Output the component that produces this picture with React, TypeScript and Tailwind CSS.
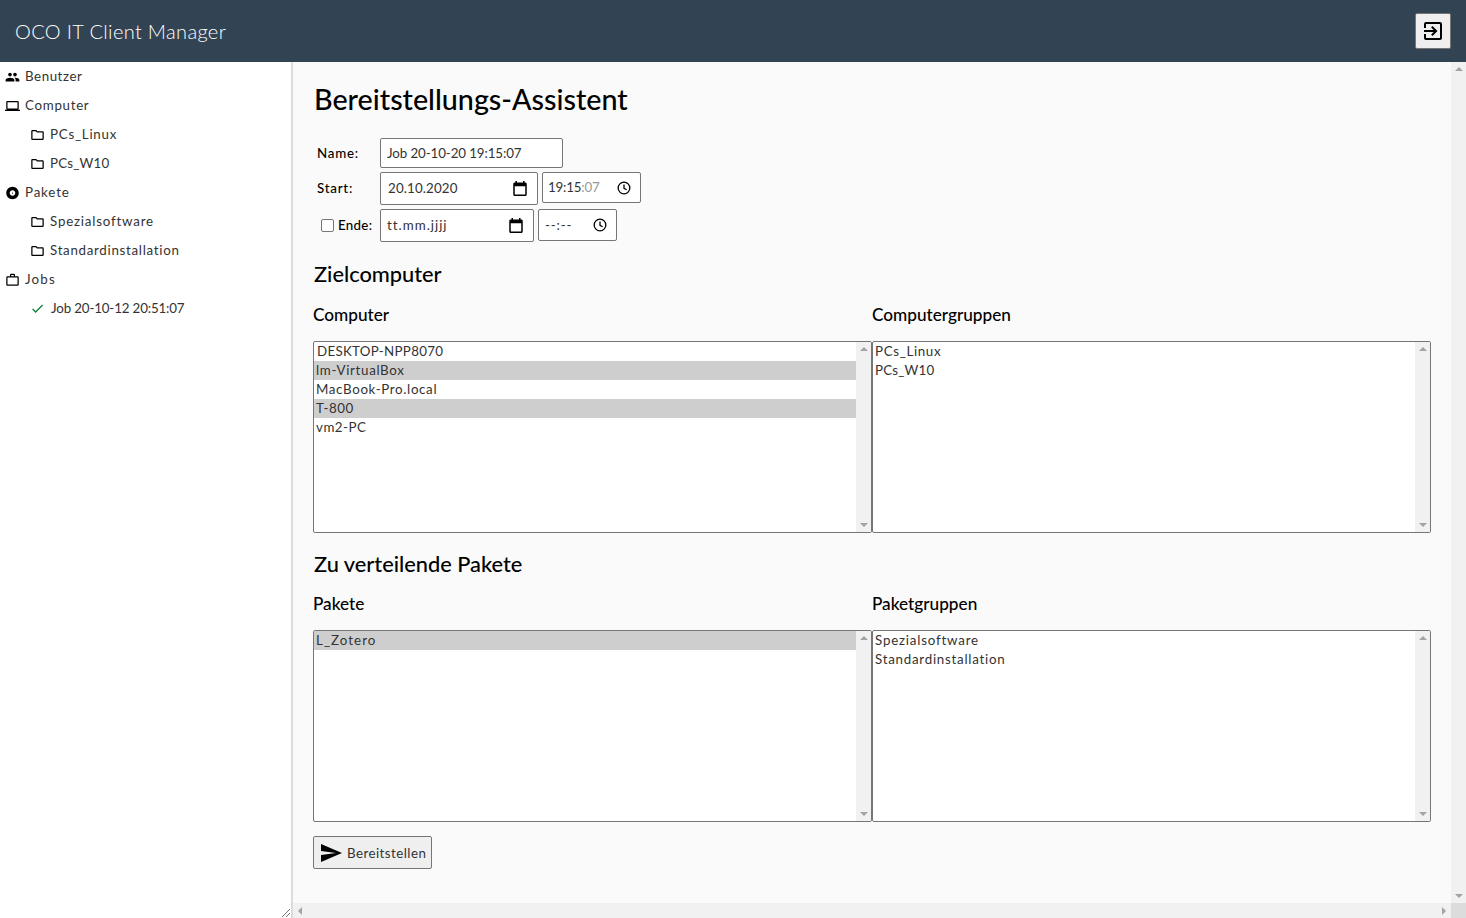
import { MdPeople, MdOutlineLaptop, MdOutlineFolder, MdAlbum, MdOutlineWorkOutline, MdCheck, MdExitToApp, MdSend } from 'react-icons/md';
import type { ReactNode } from 'react';

const CalendarIcon = () => (
  <svg width="14" height="15" viewBox="3 1 18 20" fill="#000">
    <path d="M19 3h-1V1h-2v2H8V1H6v2H5c-1.11 0-1.99.9-1.99 2L3 19c0 1.1.89 2 2 2h14c1.1 0 2-.9 2-2V5c0-1.1-.9-2-2-2zm0 16H5V8h14v11z" />
  </svg>
);

const ClockIcon = () => (
  <svg width="14" height="14" viewBox="0 0 24 24" fill="none" stroke="#000" strokeWidth="2.2">
    <circle cx="12" cy="12" r="10" />
    <path d="M12 6v6.5l4.5 2.5" />
  </svg>
);

const ArrowUp = () => <div className="w-0 h-0 border-x-[4px] border-x-transparent border-b-[4px] border-b-[#a3a3a3]" />;
const ArrowDown = () => <div className="w-0 h-0 border-x-[4px] border-x-transparent border-t-[4px] border-t-[#a3a3a3]" />;

function SideItem({ icon, label, sub, tracking = 'tracking-[0.65px]' }: { icon: ReactNode; label: string; sub?: boolean; tracking?: string }) {
  return (
    <div className={`flex items-center h-[29px] text-[13.33px] text-[#333] ${sub ? 'pl-[30px]' : 'pl-[5px]'}`}>
      <span className="w-[15px] h-[15px] flex items-center justify-center mr-[5px] text-black">{icon}</span>
      <span className={tracking}>{label}</span>
    </div>
  );
}

type Item = { label: string; selected?: boolean; tracking?: string };

function ListBox({ items }: { items: Item[] }) {
  return (
    <div className="flex-1 h-[192px] border border-[#767676] rounded-[2px] bg-white flex overflow-hidden">
      <div className="flex-1">
        {items.map(item => (
          <div
            key={item.label}
            className={`h-[19px] pl-[2px] text-[13.33px] leading-[19px] text-[#333] ${item.tracking ?? 'tracking-[0.65px]'} ${item.selected ? 'bg-[#cecece]' : ''}`}
          >
            {item.label}
          </div>
        ))}
      </div>
      <div className="w-[15px] bg-[#f1f1f1] flex flex-col items-center justify-between py-[5px]">
        <ArrowUp />
        <ArrowDown />
      </div>
    </div>
  );
}

function Field({ width, height, children }: { width: string; height: string; children: ReactNode }) {
  return (
    <div className={`${width} ${height} border border-[#767676] rounded-[2px] bg-white flex items-center justify-between text-[13.33px] text-[#333]`}>
      {children}
    </div>
  );
}

export default function App() {
  return (
    <div className="h-[918px] w-[1466px] flex flex-col overflow-hidden font-['Lato',sans-serif]">
      {/* Header */}
      <div className="h-[62px] bg-[#324454] flex items-center justify-between pl-[15px] pr-[15px]">
        <span className="text-[20px] font-light text-white tracking-[0.35px]">OCO IT Client Manager</span>
        <button className="w-[36px] h-[36px] bg-[#efefef] border border-[#767676] rounded-[2px] flex items-center justify-center">
          <MdExitToApp size={24} color="#000" />
        </button>
      </div>

      <div className="flex-1 flex min-h-0">
        {/* Sidebar */}
        <div className="relative w-[293px] bg-white border-r-2 border-[#dcdcdc]">
          <SideItem icon={<MdPeople size={16} />} label="Benutzer" tracking="tracking-[0.55px]" />
          <SideItem icon={<MdOutlineLaptop size={16} />} label="Computer" tracking="tracking-[0.7px]" />
          <SideItem sub icon={<MdOutlineFolder size={16} />} label="PCs_Linux" tracking="tracking-[0.75px]" />
          <SideItem sub icon={<MdOutlineFolder size={16} />} label="PCs_W10" tracking="tracking-[0.2px]" />
          <SideItem icon={<MdAlbum size={16} />} label="Pakete" tracking="tracking-[0.85px]" />
          <SideItem sub icon={<MdOutlineFolder size={16} />} label="Spezialsoftware" tracking="tracking-[0.8px]" />
          <SideItem sub icon={<MdOutlineFolder size={16} />} label="Standardinstallation" tracking="tracking-[0.7px]" />
          <SideItem icon={<MdOutlineWorkOutline size={16} />} label="Jobs" tracking="tracking-[1.2px]" />
          <SideItem sub icon={<MdCheck size={15} color="#15803d" />} label="Job 20-10-12 20:51:07" tracking="tracking-[-0.15px] ml-px" />
          <svg className="absolute right-0 bottom-0" width="10" height="10" viewBox="0 0 10 10" stroke="#777" strokeWidth="1">
            <path d="M1 9 9 1M5 9l4-4" />
          </svg>
        </div>

        {/* Main */}
        <div className="flex-1 flex flex-col min-w-0 bg-[#fafafa]">
          <div className="flex-1 flex min-h-0">
            <div className="flex-1 pl-[20px] pr-[20px] pt-[17px] text-black">
              <h1 className="h-[40px] leading-[40px] text-[28.7px] font-medium ml-px">Bereitstellungs-Assistent</h1>

              <div className="mt-[19px] flex flex-col gap-[4px]">
                <div className="flex items-center">
                  <label className="w-[67px] pl-[4px] pt-px text-[13.33px] font-medium tracking-[0.75px]">Name:</label>
                  <Field width="w-[183px]" height="h-[30px]">
                    <span className="pl-[6px] pt-px tracking-[-0.1px]">Job 20-10-20 19:15:07</span>
                  </Field>
                </div>
                <div className="flex items-start gap-[4px]">
                  <label className="w-[63px] h-[32px] flex items-center pl-[4px] pt-px text-[13.33px] font-medium tracking-[0.75px]">Start:</label>
                  <Field width="w-[158px]" height="h-[33px]">
                    <span className="pl-[7px] pt-px tracking-[0.15px]">20.10.2020</span>
                    <span className="mr-[10px] flex"><CalendarIcon /></span>
                  </Field>
                  <Field width="w-[99px]" height="h-[31px]">
                    <span className="pl-[5px] pt-px tracking-[-0.2px]">19:15<span className="text-[#999]">:07</span></span>
                    <span className="mr-[9px] flex"><ClockIcon /></span>
                  </Field>
                </div>
                <div className="flex items-start gap-[4px]">
                  <label className="w-[63px] h-[33px] pl-[8px] flex items-center gap-[4px] text-[13.33px] font-medium tracking-[0.3px]">
                    <span className="w-[13px] h-[13px] -mt-px border border-[#767676] rounded-[2px] bg-white" />
                    <span className="pt-px">Ende:</span>
                  </label>
                  <Field width="w-[154px]" height="h-[33px]">
                    <span className="pl-[6px] pt-px tracking-[1px]">tt.mm.jjjj</span>
                    <span className="mr-[10px] flex"><CalendarIcon /></span>
                  </Field>
                  <Field width="w-[79px]" height="h-[32px]">
                    <span className="pl-[6px] pt-px tracking-[0.8px]">--:--</span>
                    <span className="mr-[9px] flex"><ClockIcon /></span>
                  </Field>
                </div>
              </div>

              <h2 className="mt-[17px] h-[30px] leading-[30px] text-[21.8px] font-medium ml-px">Zielcomputer</h2>
              <div className="mt-[14px] flex">
                <h3 className="flex-1 h-[24px] leading-[24px] text-[17.2px] font-medium">Computer</h3>
                <h3 className="flex-1 h-[24px] leading-[24px] text-[17.2px] font-medium">Computergruppen</h3>
              </div>
              <div className="mt-[14px] flex">
                <ListBox
                  items={[
                    { label: 'DESKTOP-NPP8070', tracking: 'tracking-[0.3px] ml-px' },
                    { label: 'lm-VirtualBox', selected: true },
                    { label: 'MacBook-Pro.local' },
                    { label: 'T-800', selected: true, tracking: 'tracking-[0.5px]' },
                    { label: 'vm2-PC', tracking: 'tracking-[0.5px]' },
                  ]}
                />
                <ListBox items={[{ label: 'PCs_Linux' }, { label: 'PCs_W10', tracking: 'tracking-[0.2px]' }]} />
              </div>

              <h2 className="mt-[16px] h-[30px] leading-[30px] text-[21.8px] font-medium ml-px">Zu verteilende Pakete</h2>
              <div className="mt-[13px] flex">
                <h3 className="flex-1 h-[24px] leading-[24px] text-[17.2px] font-medium">Pakete</h3>
                <h3 className="flex-1 h-[24px] leading-[24px] text-[17.2px] font-medium">Paketgruppen</h3>
              </div>
              <div className="mt-[14px] flex">
                <ListBox items={[{ label: 'L_Zotero', selected: true, tracking: 'tracking-[1.05px]' }]} />
                <ListBox items={[{ label: 'Spezialsoftware', tracking: 'tracking-[0.8px]' }, { label: 'Standardinstallation', tracking: 'tracking-[0.75px]' }]} />
              </div>

              <button className="mt-[14px] w-[119px] h-[33px] bg-[#efefef] border border-[#767676] rounded-[2px] flex items-center pl-[5px] gap-[4px] text-[13.33px] tracking-[0.45px] text-[#333]">
                <MdSend size={24} color="#000" />
                <span className="pt-[2px]">Bereitstellen</span>
              </button>
            </div>

            {/* Vertical scrollbar */}
            <div className="w-[15px] bg-[#f1f1f1] flex flex-col items-center justify-between py-[5px]">
              <ArrowUp />
              <ArrowDown />
            </div>
          </div>

          {/* Horizontal scrollbar */}
          <div className="h-[15px] bg-[#f1f1f1] flex">
            <div className="flex-1 flex items-center justify-between px-[5px]">
              <div className="w-0 h-0 border-y-[4px] border-y-transparent border-r-[4px] border-r-[#a3a3a3]" />
              <div className="w-0 h-0 border-y-[4px] border-y-transparent border-l-[4px] border-l-[#a3a3a3]" />
            </div>
            <div className="w-[15px] bg-[#dcdcdc]" />
          </div>
        </div>
      </div>
    </div>
  );
}
